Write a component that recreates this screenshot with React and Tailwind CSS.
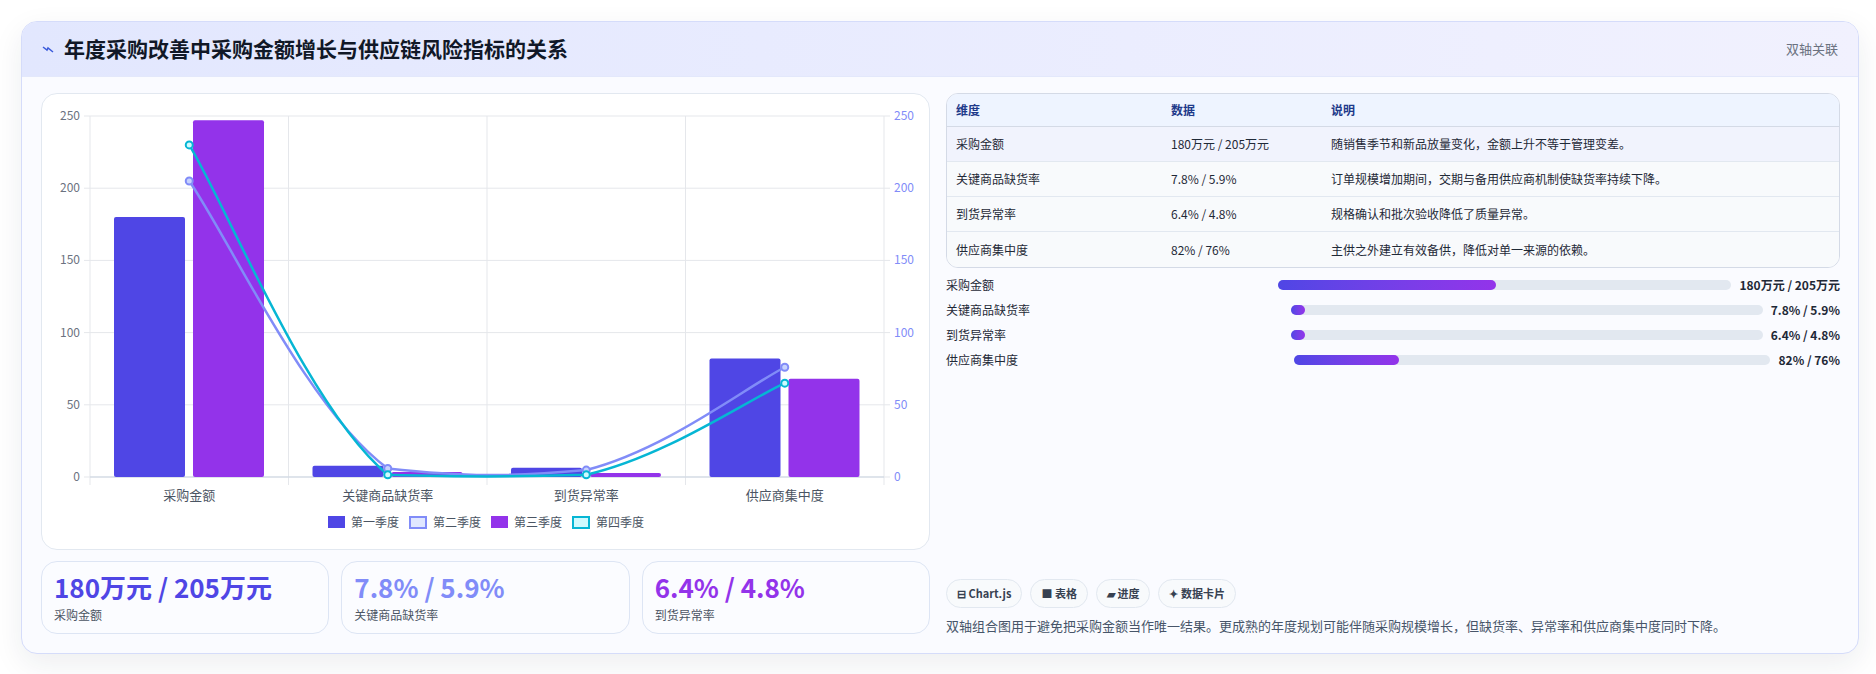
const FONT = { fontFamily: '"Noto Sans CJK SC", "Noto Sans", sans-serif' };

const cats = ['采购金额', '关键商品缺货率', '到货异常率', '供应商集中度'];
const q1 = [180, 7.8, 6.4, 82];
const q3 = [247, 3.5, 2.8, 68];
const q2 = [205, 5.9, 4.8, 76];
const q4 = [230, 1.5, 1.5, 65];

const L = 48, R = 842, T = 22, B = 383;
const cw = (R - L) / 4;
const y = (v) => B - (v / 250) * (B - T);
const cx = (i) => L + cw * i + cw / 2;

function curve(vals) {
  const p = vals.map((v, i) => [cx(i), Math.min(y(v), B)]);
  let d = `M${p[0][0]},${p[0][1]}`;
  const t = 0.2;
  for (let i = 0; i < p.length - 1; i++) {
    const p0 = p[i - 1] || p[i], p1 = p[i], p2 = p[i + 1], p3 = p[i + 2] || p2;
    const c1 = [p1[0] + (p2[0] - p0[0]) * t, Math.min(B, p1[1] + (p2[1] - p0[1]) * t)];
    const c2 = [p2[0] - (p3[0] - p1[0]) * t, Math.min(B, p2[1] - (p3[1] - p1[1]) * t)];
    d += ` C${c1[0]},${c1[1]} ${c2[0]},${c2[1]} ${p2[0]},${p2[1]}`;
  }
  return d;
}

function Chart() {
  return (
    <svg width="889" height="457" className="block" style={FONT}>
      {[0, 50, 100, 150, 200, 250].map((v) => (
        <g key={v}>
          <line x1={L - 6} x2={R + 6} y1={y(v)} y2={y(v)} stroke="#e5e7eb" />
          <text x={L - 10} y={y(v) + 4} fontSize="12" fill="#6b7280" textAnchor="end">{v}</text>
          <text x={R + 10} y={y(v) + 4} fontSize="12" fill="#818cf8">{v}</text>
        </g>
      ))}
      {[0, 1, 2, 3, 4].map((i) => (
        <line key={i} x1={L + cw * i} x2={L + cw * i} y1={T} y2={B + 8} stroke="#e5e7eb" />
      ))}
      <line x1={L} x2={R} y1={B} y2={B} stroke="#cbd5e1" />
      {cats.map((c, i) => (
        <g key={c}>
          <rect x={L + cw * i + 24} y={y(q1[i])} width="71" height={B - y(q1[i])} rx="2" fill="#4f46e5" />
          <rect x={L + cw * i + 103} y={y(q3[i])} width="71" height={B - y(q3[i])} rx="2" fill="#9333ea" />
          <text x={cx(i)} y={B + 23} fontSize="13" fill="#4b5563" textAnchor="middle">{c}</text>
        </g>
      ))}
      <path d={curve(q2)} fill="none" stroke="#818cf8" strokeWidth="2.5" />
      <path d={curve(q4)} fill="none" stroke="#06b6d4" strokeWidth="2.5" />
      {q2.map((v, i) => <circle key={'a' + i} cx={cx(i)} cy={y(v)} r="3.5" fill="#c7d2fe" stroke="#818cf8" strokeWidth="2" />)}
      {q4.map((v, i) => <circle key={'b' + i} cx={cx(i)} cy={Math.min(y(v), B)} r="3.5" fill="#cffafe" stroke="#06b6d4" strokeWidth="2" />)}
      <g fontSize="12" fill="#4b5563">
        <rect x="286" y="422" width="17" height="12" fill="#4f46e5" />
        <text x="309" y="433">第一季度</text>
        <rect x="368" y="423" width="16" height="11" fill="#e0e7ff" stroke="#818cf8" strokeWidth="2" />
        <text x="391" y="433">第二季度</text>
        <rect x="449" y="422" width="17" height="12" fill="#9333ea" />
        <text x="472" y="433">第三季度</text>
        <rect x="531" y="423" width="16" height="11" fill="#cffafe" stroke="#06b6d4" strokeWidth="2" />
        <text x="554" y="433">第四季度</text>
      </g>
    </svg>
  );
}

const rows = [
  ['采购金额', '180万元 / 205万元', '随销售季节和新品放量变化，金额上升不等于管理变差。'],
  ['关键商品缺货率', '7.8% / 5.9%', '订单规模增加期间，交期与备用供应商机制使缺货率持续下降。'],
  ['到货异常率', '6.4% / 4.8%', '规格确认和批次验收降低了质量异常。'],
  ['供应商集中度', '82% / 76%', '主供之外建立有效备供，降低对单一来源的依赖。'],
];
const fills = [48, 3, 3, 22];

export default function App() {
  return (
    <div className="min-h-screen bg-white pt-[21px] pl-[21px] pr-[17px]" style={FONT}>
      <div className="w-[1838px] h-[633px] rounded-2xl border border-[#d5dcfa] bg-[#fafbff] shadow-[0_10px_30px_rgba(30,41,59,0.08)] overflow-hidden flex flex-col">
        <div className="h-[55px] shrink-0 flex items-center justify-between px-[20px] border-b border-[#e3e8fb] bg-gradient-to-r from-[#e2e7fe] to-[#f1f1fe]">
          <div className="flex items-center gap-[10px]">
            <svg width="12" height="10" viewBox="0 0 12 10"><path d="M1 3 L5 6 L6 4 L11 8" stroke="#3b5bdb" strokeWidth="1.5" fill="none" /></svg>
            <span className="text-[21px] font-bold text-[#111827]">年度采购改善中采购金额增长与供应链风险指标的关系</span>
          </div>
          <span className="text-[13px] text-[#6b7280]">双轴关联</span>
        </div>
        <div className="flex-1 grid grid-cols-[889px_894px] gap-[16px] px-[19px] pt-[16px] pb-[18px]">
          <div className="flex flex-col gap-[11px]">
            <div className="h-[457px] rounded-2xl border border-[#e2e8f0] bg-white overflow-hidden">
              <Chart />
            </div>
            <div className="grid grid-cols-3 gap-[12px]">
              {[['180万元 / 205万元', '采购金额', 'text-[#4f46e5]'], ['7.8% / 5.9%', '关键商品缺货率', 'text-[#818cf8]'], ['6.4% / 4.8%', '到货异常率', 'text-[#9333ea]']].map(([v, l, c]) => (
                <div key={l} className="h-[73px] rounded-2xl border border-[#dde5f4] bg-[#fbfcff] px-[12px] pt-[9px]">
                  <div className={`text-[26px] leading-[32px] font-bold ${c}`}>{v}</div>
                  <div className="text-[12px] text-[#4b5563] mt-[3px]">{l}</div>
                </div>
              ))}
            </div>
          </div>
          <div className="flex flex-col">
            <div className="rounded-xl border border-[#d4dae6] overflow-hidden text-[12px]">
              <div className="grid grid-cols-[215px_160px_1fr] h-[33px] items-center px-[9px] bg-[#eef4ff] border-b border-[#d4dae6] font-semibold text-[#1e3a8a]">
                <span>维度</span><span>数据</span><span>说明</span>
              </div>
              {rows.map((r, i) => (
                <div key={r[0]} className={`grid grid-cols-[215px_160px_1fr] h-[35px] items-center px-[9px] text-[#1f2937] ${i < 3 ? 'border-b border-[#e2e8f0]' : ''} ${i === 0 ? 'bg-[#f1f3fd]' : 'bg-[#f8fafc]'}`}>
                  <span>{r[0]}</span><span>{r[1]}</span><span>{r[2]}</span>
                </div>
              ))}
            </div>
            <div className="mt-[8px] flex flex-col gap-[7px]">
              {rows.map((r, i) => (
                <div key={r[0]} className="grid grid-cols-[5fr_7fr_auto] gap-[8px] items-center h-[18px] text-[12px]">
                  <span className="text-[#1f2937]">{r[0]}</span>
                  <div className="h-[10px] rounded-full bg-[#e2e8f0]">
                    <div className="h-full rounded-full bg-gradient-to-r from-[#4f46e5] to-[#9333ea]" style={{ width: `${fills[i]}%` }} />
                  </div>
                  <span className="font-bold text-[#1f2937]">{r[1]}</span>
                </div>
              ))}
            </div>
            <div className="mt-auto flex gap-[8px] text-[11px] font-bold text-[#374151]">
              {['⊟ Chart.js', '■ 表格', '▰ 进度', '✦ 数据卡片'].map((t) => (
                <span key={t} className="h-[29px] px-[10px] flex items-center rounded-full border border-[#e2e8f0] bg-[#f8fafc]">{t}</span>
              ))}
            </div>
            <p className="mt-[8px] text-[13px] text-[#475569]">双轴组合图用于避免把采购金额当作唯一结果。更成熟的年度规划可能伴随采购规模增长，但缺货率、异常率和供应商集中度同时下降。</p>
          </div>
        </div>
      </div>
    </div>
  );
}
